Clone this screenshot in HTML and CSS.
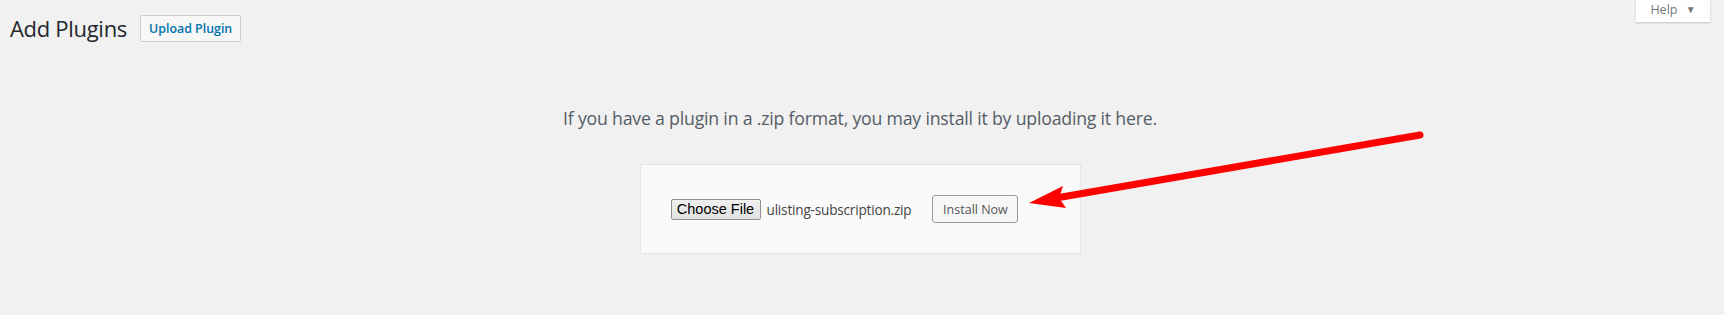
FILE: index.html
```html
<!DOCTYPE html>
<html lang="en">
<head>
    <meta charset="UTF-8">
    <title>Add Plugins</title>
    <link rel="stylesheet" href="styles.css">
</head>
<body>

<div class="wrap">
    <div class="top">
        <div class="title-row">
            <h1>Add Plugins</h1>
            <a class="page-title-action" href="#">Upload Plugin</a>
        </div>
        <button class="help-tab" type="button">Help <span class="caret">&#9660;</span></button>
    </div>

    <div class="upload-plugin">
        <p class="install-help">If you have a plugin in a .zip format, you may install it by uploading it here.</p>
        <form class="wp-upload-form">
            <span class="file-btn">Choose File</span>
            <span class="file-name">ulisting-subscription.zip</span>
            <button class="button" type="button">Install Now</button>
        </form>
    </div>
</div>

<svg class="arrow" width="1724" height="315" viewBox="0 0 1724 315">
    <line x1="1420" y1="135" x2="1056" y2="198" stroke="#ff0000" stroke-width="7" stroke-linecap="round"/>
    <polygon points="1029,203 1063,186 1059,198 1066,208" fill="#ff0000"/>
</svg>

</body>
</html>
```

FILE: styles.css
```css
body {
    margin: 0;
    background-color: #f1f1f1;
    font-family: "Open Sans", "Noto Sans", sans-serif;
    color: #23282d;
    position: relative;
}

.wrap {
    padding: 0 14px 0 10px;
}

.top {
    display: flex;
    justify-content: space-between;
    align-items: flex-start;
}

.title-row {
    display: flex;
    align-items: center;
    padding-top: 14px;
}

h1 {
    margin: 0;
    font-size: 22px;
    font-weight: 400;
    line-height: 29px;
    letter-spacing: -0.3px;
}

.page-title-action {
    margin-left: 13px;
    height: 25px;
    padding: 0 8px;
    border: 1px solid #ccc;
    border-radius: 2px;
    background-color: #f7f7f7;
    color: #0073aa;
    font-size: 12.4px;
    font-weight: 600;
    line-height: 25px;
    text-decoration: none;
}

.help-tab {
    width: 74px;
    height: 22px;
    border: 0;
    background-color: #fff;
    box-shadow: 0 1px 2px rgba(0, 0, 0, 0.2);
    color: #72777c;
    font-family: "Open Sans", sans-serif;
    font-size: 12.5px;
    line-height: 16px;
    padding: 0 0 4px;
}

.caret {
    font-size: 10px;
    margin-left: 5px;
    vertical-align: 1px;
}

.install-help {
    margin: 0;
    padding: 62px 0 0;
    text-align: center;
    color: #555d66;
    font-size: 17.7px;
    line-height: 26px;
    letter-spacing: -0.2px;
}

.upload-plugin {
    text-align: center;
}

.wp-upload-form {
    display: inline-flex;
    align-items: center;
    width: 379px;
    margin: 33px 0 0;
    padding: 30px;
    background-color: #fafafa;
    border: 1px solid #e5e5e5;
}

.file-btn {
    box-sizing: border-box;
    width: 90px;
    height: 21px;
    border: 1px solid #8f8f8f;
    border-radius: 2px;
    background: linear-gradient(#f0f0f0, #e1e1e1);
    color: #000;
    font-family: "Liberation Sans", Arial, sans-serif;
    font-size: 14.5px;
    line-height: 19px;
}

.file-name {
    margin-left: 6px;
    color: #444;
    font-family: "Open Sans", sans-serif;
    font-size: 13.6px;
    letter-spacing: -0.2px;
}

.button {
    margin-left: 21px;
    width: 86px;
    height: 28px;
    border: 1px solid #999;
    border-radius: 3px;
    background-color: #f7f7f7;
    color: #555;
    font-family: "Open Sans", sans-serif;
    font-size: 12.5px;
    padding: 0;
}

.arrow {
    position: absolute;
    left: 0;
    top: 0;
    pointer-events: none;
}
```
